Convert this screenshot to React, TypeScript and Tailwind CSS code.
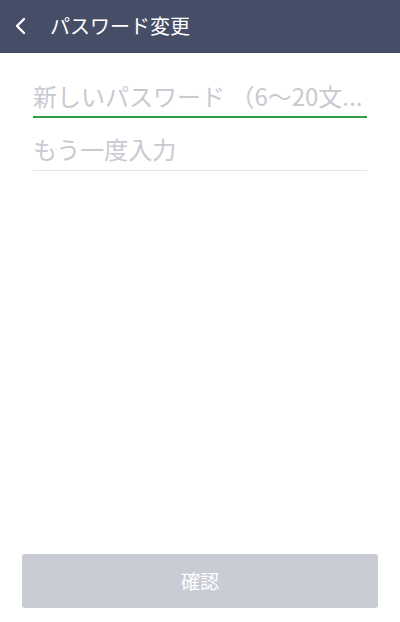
export default function App() {
  return (
    <div
      className="flex h-[622px] w-[400px] flex-col bg-white"
      style={{ fontFamily: '"Noto Sans CJK JP", "Noto Sans", sans-serif' }}
    >
      <header className="flex h-[53px] shrink-0 items-center border-b border-[#3d4359] bg-[#464d67] text-white">
        <svg
          className="ml-[14px] h-[20px] w-[14px]"
          viewBox="0 0 14 20"
          fill="none"
          stroke="white"
          strokeWidth="2.4"
          strokeLinecap="round"
          strokeLinejoin="round"
        >
          <polyline points="10,3 3,10 10,17" />
        </svg>
        <h1 className="ml-[22px] text-[20px] leading-none">パスワード変更</h1>
      </header>

      <div className="mt-[12px] px-[33px]">
        <div className="flex h-[53px] items-end border-b-2 border-[#2f9c47] pb-[6px]">
          <span className="whitespace-nowrap text-[24px] leading-[28px] text-[#c8cad0]">
            新しいパスワード （6〜20文...
          </span>
        </div>
        <div className="flex h-[53px] items-end border-b border-[#e3e4e8] pb-[7px]">
          <span className="text-[24px] leading-[28px] text-[#c8cad0]">もう一度入力</span>
        </div>
      </div>

      <div className="flex-1" />

      <button className="mx-[22px] mb-[14px] h-[54px] rounded-[3px] bg-[#c9ccd5] text-[19px] text-white">
        確認
      </button>
    </div>
  );
}
